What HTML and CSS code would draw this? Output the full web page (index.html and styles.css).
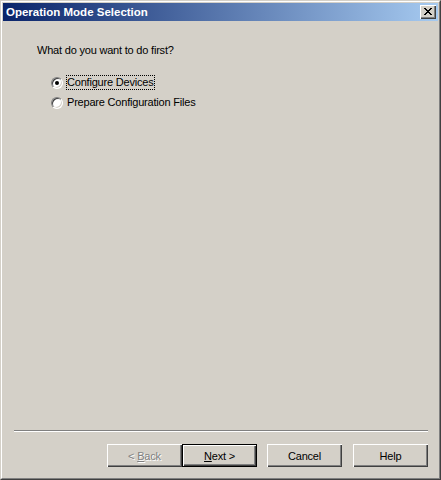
FILE: index.html
```html
<!DOCTYPE html>
<html lang="en">
<head>
  <meta charset="UTF-8">
  <meta name="viewport" content="width=device-width, initial-scale=1.0">
  <title>Operation Mode Selection</title>
  <link rel="stylesheet" href="styles.css">
</head>
<body>

  <div class="window">
    <div class="frame">

      <!-- Title Bar -->
      <div class="titlebar">
        <span class="title">Operation Mode Selection</span>
        <button class="close-btn" aria-label="Close">
          <svg width="8" height="7" viewBox="0 0 8 7" shape-rendering="crispEdges">
            <path d="M0 0h2v1h-2zM6 0h2v1h-2zM1 1h2v1h-2zM5 1h2v1h-2zM2 2h4v1h-4zM3 3h2v1h-2zM2 4h4v1h-4zM1 5h2v1h-2zM5 5h2v1h-2zM0 6h2v1h-2zM6 6h2v1h-2z" fill="#000"/>
          </svg>
        </button>
      </div>

      <!-- Page Content -->
      <div class="content">
        <p class="question">What do you want to do first?</p>
        <div class="options">
          <label class="option">
            <span class="radio checked"></span>
            <span class="option-text focused">Configure Devices</span>
          </label>
          <label class="option">
            <span class="radio"></span>
            <span class="option-text">Prepare Configuration Files</span>
          </label>
        </div>
      </div>

      <!-- Footer -->
      <div class="footer">
        <div class="separator"></div>
        <div class="buttons">
          <button class="btn disabled">&lt; <u>B</u>ack</button>
          <button class="btn default"><u>N</u>ext &gt;</button>
          <button class="btn cancel">Cancel</button>
          <button class="btn help">Help</button>
        </div>
      </div>

    </div>
  </div>

</body>
</html>
```

FILE: styles.css
```css
* {
  margin: 0;
  padding: 0;
  box-sizing: border-box;
}
body {
  font-family: "Liberation Sans", Arial, sans-serif;
  font-size: 11px;
  letter-spacing: -0.2px;
  background-color: #d4d0c8;
  width: 441px;
  height: 480px;
}
.window {
  width: 441px;
  height: 480px;
  border: 1px solid;
  border-color: #d4d0c8 #404040 #404040 #d4d0c8;
  background-color: #d4d0c8;
}
.frame {
  height: 100%;
  border: 1px solid;
  border-color: #fff #808080 #808080 #fff;
  padding: 1px;
  display: flex;
  flex-direction: column;
}
.titlebar {
  height: 18px;
  background: linear-gradient(to right, #0a246a, #a6caf0);
  display: flex;
  align-items: center;
  justify-content: space-between;
  padding: 0 2px 0 3px;
}
.title {
  color: white;
  font-weight: bold;
  font-size: 11.5px;
  letter-spacing: 0;
  line-height: 13px;
}
.close-btn {
  width: 16px;
  height: 14px;
  background-color: #d4d0c8;
  border: none;
  box-shadow: inset 1px 1px #fff, inset -1px -1px #404040, inset -2px -2px #808080;
  display: flex;
  align-items: center;
  justify-content: center;
  padding: 0 1px 1px 0;
}
.close-btn svg {
  display: block;
}
.content {
  flex: 1;
  padding: 23px 0 0 34px;
}
.question {
  line-height: 13px;
  color: #000;
}
.options {
  margin-top: 19px;
  margin-left: 14px;
  display: flex;
  flex-direction: column;
  gap: 7px;
}
.option {
  display: flex;
  align-items: center;
  height: 13px;
}
.radio {
  width: 12px;
  height: 12px;
  border-radius: 50%;
  border: 1px solid;
  border-color: #808080 #fff #fff #808080;
  background-color: #fff;
  box-shadow: inset 1px 1px #404040, inset -1px -1px #d4d0c8;
  display: flex;
  align-items: center;
  justify-content: center;
  margin-right: 3px;
}
.radio.checked::after {
  content: "";
  width: 4px;
  height: 4px;
  border-radius: 50%;
  background-color: #000;
}
.option-text {
  line-height: 13px;
  padding: 0 1px 0 0;
  border: 1px solid transparent;
}
.option-text.focused {
  border: 1px dotted #000;
}
.footer {
  padding: 0 10px 10px 11px;
}
.separator {
  height: 2px;
  border-top: 1px solid #808080;
  border-bottom: 1px solid #fff;
}
.buttons {
  margin-top: 12px;
  display: flex;
  justify-content: flex-end;
}
.btn {
  width: 75px;
  height: 23px;
  font-family: "Liberation Sans", Arial, sans-serif;
  font-size: 11px;
  letter-spacing: -0.2px;
  color: #000;
  background-color: #d4d0c8;
  border: none;
  box-shadow: inset 1px 1px #fff, inset -1px -1px #404040, inset -2px -2px #808080;
}
.btn.disabled {
  color: #808080;
  text-shadow: 1px 1px #fff;
}
.btn.default {
  border: 1px solid #000;
}
.btn.cancel {
  margin-left: 10px;
}
.btn.help {
  margin-left: 11px;
}
```
